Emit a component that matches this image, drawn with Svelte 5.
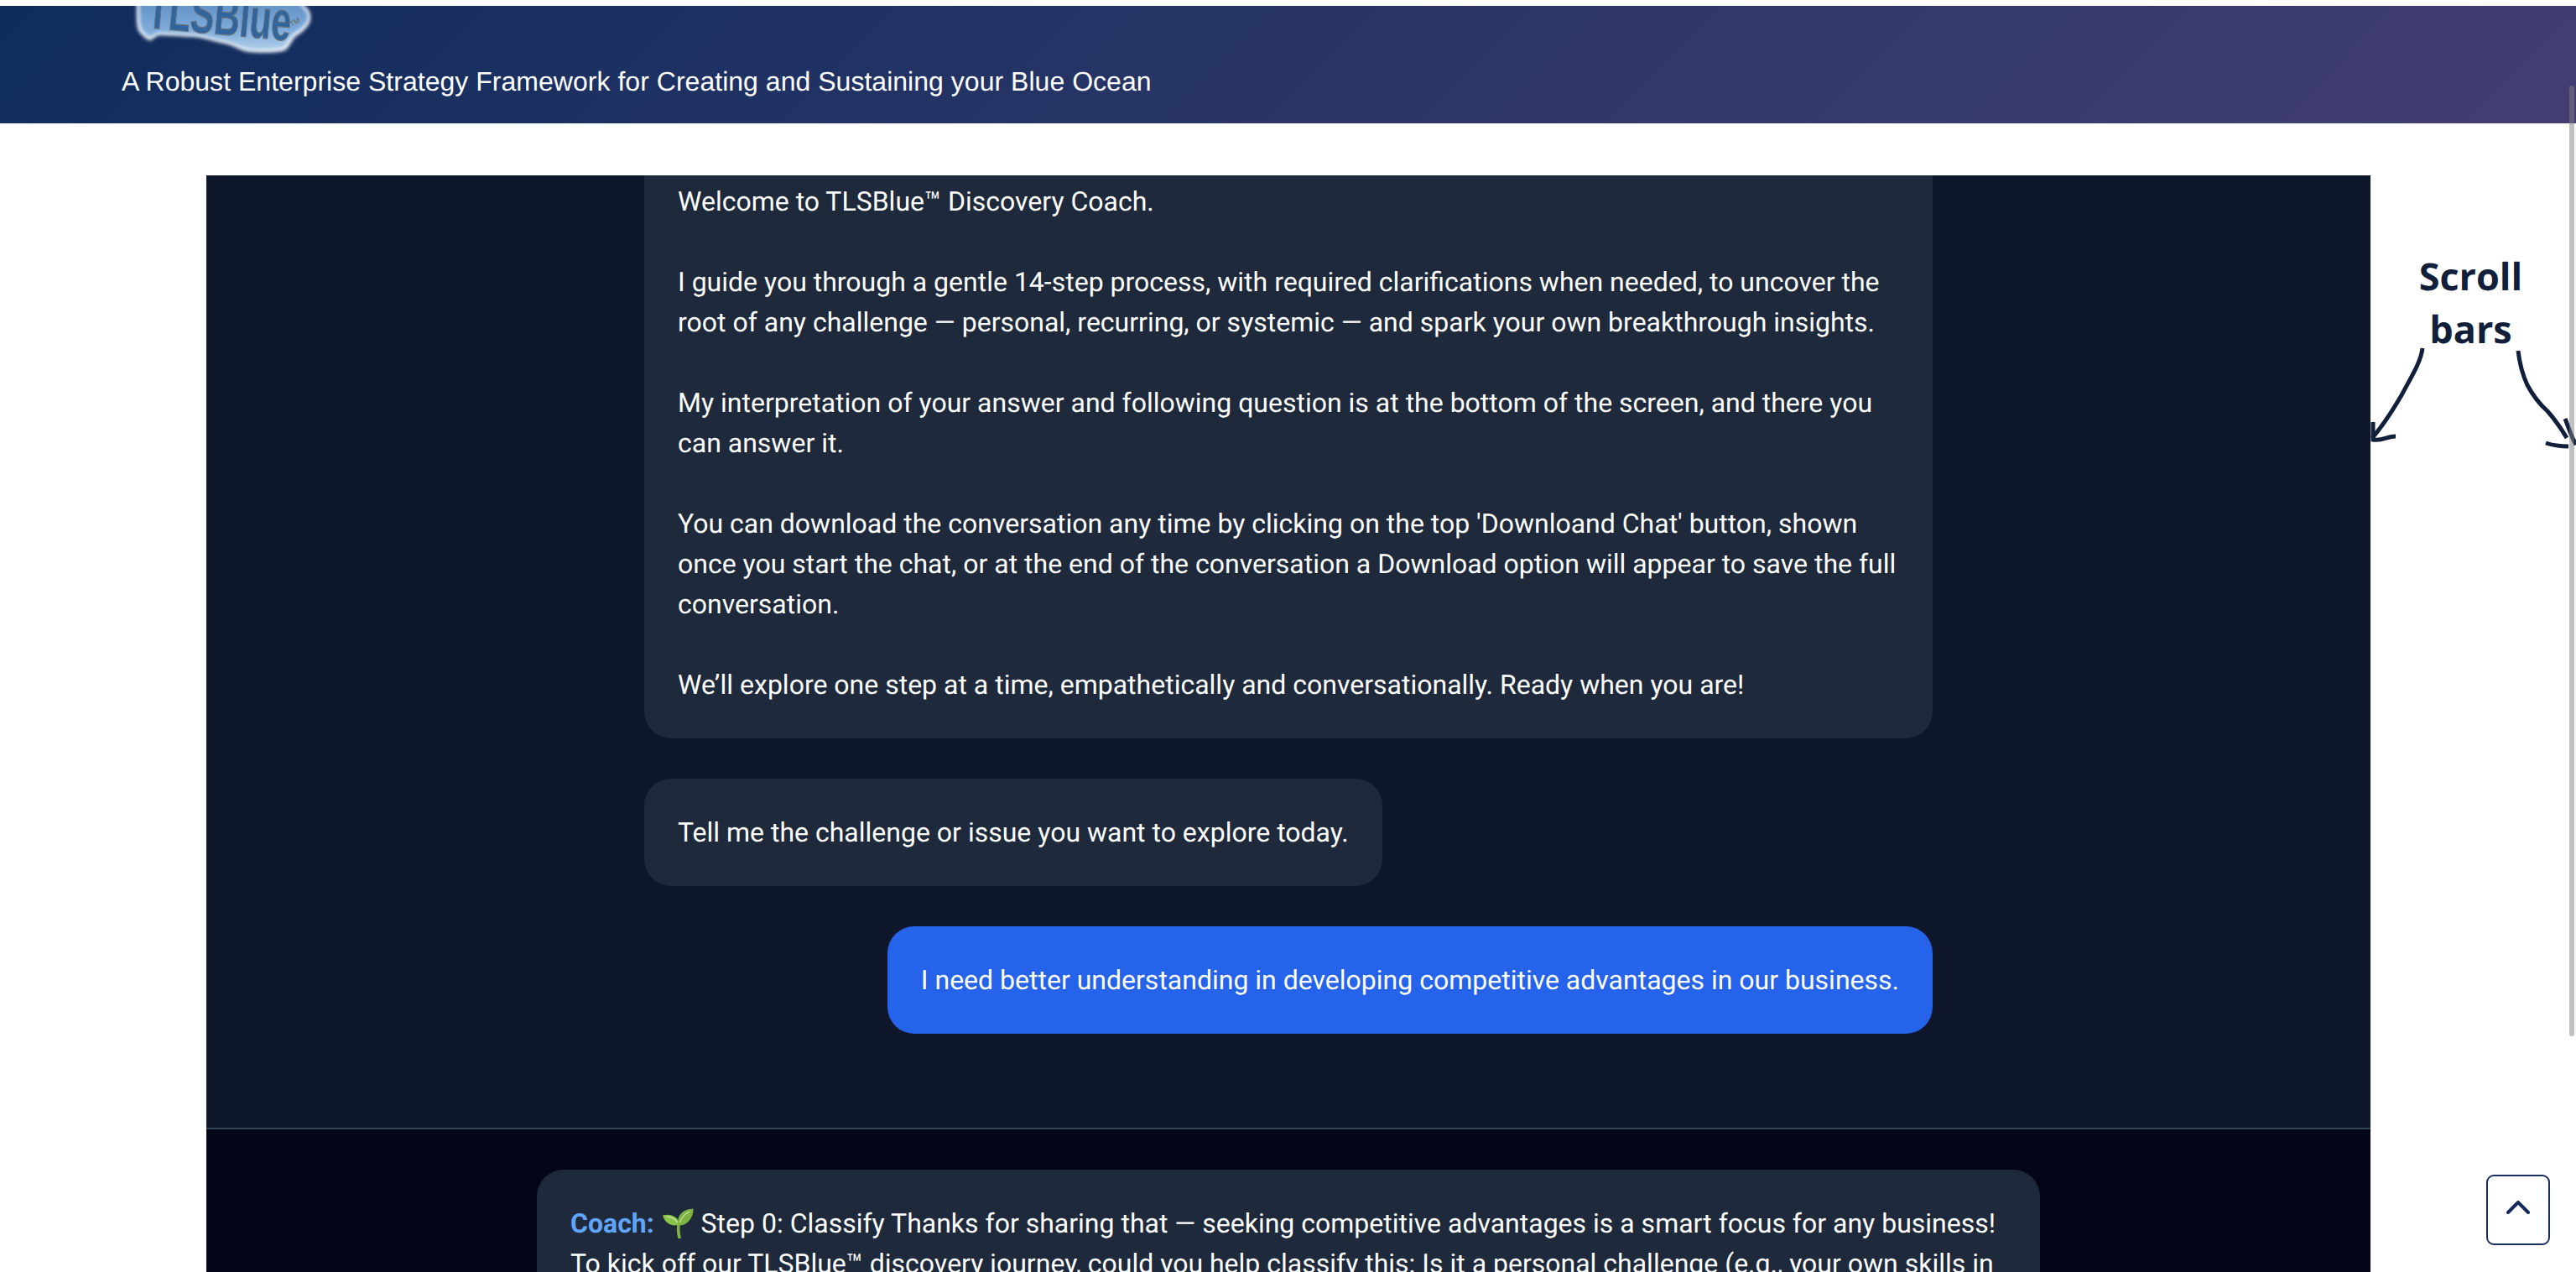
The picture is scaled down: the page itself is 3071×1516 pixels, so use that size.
<script>
  const intro = `Welcome to TLSBlue™ Discovery Coach.

I guide you through a gentle 14-step process, with required clarifications when needed, to uncover the root of any challenge — personal, recurring, or systemic — and spark your own breakthrough insights.

My interpretation of your answer and following question is at the bottom of the screen, and there you can answer it.

You can download the conversation any time by clicking on the top 'Downloand Chat' button, shown once you start the chat, or at the end of the conversation a Download option will appear to save the full conversation.

We’ll explore one step at a time, empathetically and conversationally. Ready when you are!`;

  const messages = [
    { from: 'bot', text: intro },
    { from: 'bot', text: 'Tell me the challenge or issue you want to explore today.' },
    { from: 'user', text: 'I need better understanding in developing competitive advantages in our business.' }
  ];
</script>

<div class="page">
  <header class="banner">
    <svg class="logo" viewBox="0 0 215 57" width="215" height="57" aria-label="TLSBlue logo">
      <defs>
        <linearGradient id="blob" x1="0" y1="0" x2="0" y2="1">
          <stop offset="0" stop-color="#5f90c6" />
          <stop offset="0.65" stop-color="#82aedb" />
          <stop offset="1" stop-color="#b4cfea" />
        </linearGradient>
        <filter id="soft" x="-10%" y="-20%" width="120%" height="140%">
          <feGaussianBlur stdDeviation="2" />
        </filter>
        <filter id="softer" x="-10%" y="-20%" width="120%" height="140%">
          <feGaussianBlur stdDeviation="0.6" />
        </filter>
      </defs>
      <path
        class="blob-edge"
        filter="url(#soft)"
        d="M3 -6 C3 10 2 24 6 31 C11 36 16 42 20 41 C25 37 28 34 34 35 C50 36 68 36 80 38 C92 41 103 44 113 46 C122 49 130 55 140 55 C155 56 170 56 180 53 C186 48 188 40 193 36 C200 32 209 24 210 16 C211 10 208 4 204 1 L197 -6 Z"
      />
      <path
        fill="url(#blob)"
        filter="url(#soft)"
        d="M6 -6 C6 10 6 22 9 29 C13 33 17 38 20 37 C25 33 29 31 34 32 C50 33 68 33 80 35 C92 38 103 41 113 43 C122 46 130 51 140 52 C155 53 168 52 177 50 C183 45 185 37 190 33 C197 29 206 22 207 16 C208 10 205 5 201 2 L195 -6 Z"
      />
      <g filter="url(#softer)">
        <text class="logo-text" x="0" y="0" transform="translate(14 26) rotate(5.2)" textLength="172" lengthAdjust="spacingAndGlyphs">TLSBlue</text>
        <text class="logo-tm" x="0" y="0" transform="translate(187 25) rotate(-28)">TM</text>
      </g>
    </svg>
    <p class="tagline">A Robust Enterprise Strategy Framework for Creating and Sustaining your Blue Ocean</p>
  </header>

  <main class="panel">
    <section class="chat">
      <div class="chat-inner">
        {#each messages as msg}
          <div class="bubble {msg.from}">{msg.text}</div>
        {/each}
      </div>
    </section>

    <section class="composer">
      <div class="coach-card">
        <span class="coach">Coach:</span>
        <svg class="seedling" viewBox="0 0 37 36" width="38" height="36" aria-hidden="true">
          <path d="M19 36 C17 30 17 24 18 18 L21.5 18 C20.5 24 21 30 22.5 35 C22 36.5 20 36.8 19 36 Z" fill="#7cb342" />
          <path d="M18.5 20 C12 22 3 18 0.5 8.5 C8 6 17 9 20 16 Z" fill="#8bc34a" />
          <path d="M19 19.5 C17 8 25 1 37 0.5 C37.5 11 30 20 21.5 20.5 Z" fill="#7cb342" />
          <path d="M5 10 C10 10 15 12 18 17" fill="none" stroke="#dce8b8" stroke-width="1.2" />
          <path d="M21 17 C23 11 28 6 33 4" fill="none" stroke="#cfe0a0" stroke-width="1.2" />
        </svg>
        Step 0: Classify Thanks for sharing that — seeking competitive advantages is a smart focus for any business!
        To kick off our TLSBlue™ discovery journey, could you help classify this: Is it a personal challenge (e.g., your own skills in
      </div>
    </section>
  </main>

  <div class="note">
    <div class="note-label">Scroll<br />bars</div>
    <svg class="note-arrows" viewBox="0 0 251 130" width="251" height="130" aria-hidden="true">
      <g fill="none" stroke="#111f3b" stroke-width="5" stroke-linecap="butt">
        <path d="M68 3 C66 20 54 38 43 59 C32 78 20 96 8 110" />
        <path d="M9 91 L9 112 C20 114 26 108 36 108" />
        <path d="M182 6 C184 24 188 36 193 47 C200 60 208 70 217 78 C226 88 234 100 240 110" />
        <path d="M215 116 C224 119 232 120 242 120" />
        <path d="M238 87 C242 97 246 110 251 118" />
      </g>
    </svg>
  </div>

  <div class="scrollbar"></div>

  <button class="to-top" aria-label="Back to top">
    <svg viewBox="0 0 28 16" width="28" height="16">
      <path d="M2 14 L14 2 L26 14" fill="none" stroke="#12295c" stroke-width="4" stroke-linecap="round" stroke-linejoin="round" />
    </svg>
  </button>
</div>

<style>
  :global(body) {
    margin: 0;
    background: #fff;
    overflow: hidden;
  }

  .page {
    position: relative;
    display: flex;
    flex-direction: column;
    height: 1516px;
    padding-top: 7px;
    box-sizing: border-box;
    overflow: hidden;
    font-family: Roboto, "Liberation Sans", sans-serif;
    text-rendering: geometricPrecision;
  }

  .banner {
    flex: none;
    height: 140px;
    box-sizing: border-box;
    padding-left: 145px;
    background: linear-gradient(135deg, #0f2c5c, #433e72);
    overflow: hidden;
  }

  .logo {
    display: block;
    margin-left: 15px;
    overflow: visible;
  }

  .blob-edge {
    fill: #f2f6fb;
  }

  .logo-text {
    font-family: "Liberation Sans", sans-serif;
    font-size: 66px;
    font-weight: 700;
    fill: #33659c;
    stroke: #6a7583;
    stroke-width: 1.2px;
  }

  .logo-tm {
    font-family: "Liberation Sans", sans-serif;
    font-size: 9px;
    font-weight: 700;
    fill: #6d7480;
  }

  .tagline {
    margin: 15px 0 0;
    font-family: "Liberation Sans", Arial, sans-serif;
    font-size: 32px;
    line-height: 37px;
    letter-spacing: 0.025px;
    color: #fff;
  }

  .panel {
    flex: 1;
    min-height: 0;
    display: flex;
    flex-direction: column;
    width: 2580px;
    margin: 62px 0 0 246px;
    background: #020617;
    color: #fff;
    font-size: 32px;
    line-height: 48px;
  }

  .chat {
    flex: none;
    height: 1137px;
    display: flex;
    flex-direction: column;
    justify-content: flex-end;
    padding-bottom: 112px;
    box-sizing: border-box;
    background: #0f172a;
    border-bottom: 2px solid #334155;
    overflow: hidden;
  }

  .chat-inner {
    width: 1536px;
    margin: 0 auto;
    display: flex;
    flex-direction: column;
    gap: 48px;
  }

  .bubble {
    padding: 40px;
    border-radius: 32px;
    white-space: pre-line;
  }

  .bubble.bot {
    align-self: flex-start;
    background: #1e293b;
  }

  .bubble.user {
    align-self: flex-end;
    background: #2563eb;
  }

  .composer {
    flex: 1;
    padding-top: 48px;
  }

  .coach-card {
    width: 1792px;
    box-sizing: border-box;
    margin: 0 auto;
    padding: 40px;
    border-radius: 32px;
    background: #1e293b;
  }

  .coach {
    font-weight: 700;
    color: #60a5fa;
  }

  .seedling {
    margin: 0 1px;
    vertical-align: -7px;
  }

  .note {
    position: absolute;
    left: 2820px;
    top: 298px;
    width: 251px;
    height: 240px;
  }

  .note-label {
    text-align: center;
    font-family: "Open Sans", sans-serif;
    font-weight: 700;
    font-size: 45px;
    line-height: 63px;
    color: #111f3b;
    width: 251px;
  }

  .note-arrows {
    position: absolute;
    left: 0;
    top: 114px;
    overflow: hidden;
  }

  .scrollbar {
    position: absolute;
    left: 3063px;
    top: 102px;
    width: 6px;
    height: 1133px;
    border-radius: 3px;
    background: rgba(128, 128, 128, 0.5);
  }

  .to-top {
    position: absolute;
    left: 2964px;
    top: 1400px;
    width: 76px;
    height: 84px;
    padding: 0 0 6px;
    display: flex;
    align-items: center;
    justify-content: center;
    background: #fff;
    border: 2px solid #1a2e5e;
    border-radius: 9px;
  }
</style>
